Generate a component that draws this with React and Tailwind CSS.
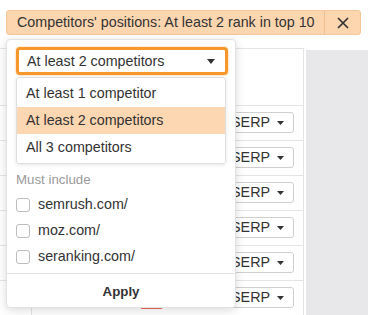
import React from 'react';

const Caret = ({ w = 8, h = 5 }) => (
    <svg width={w} height={h} viewBox={`0 0 ${w} ${h}`} className="shrink-0">
        <polygon points={`0,0 ${w},0 ${w / 2},${h}`} fill="#333" />
    </svg>
);

const options = ['At least 1 competitor', 'At least 2 competitors', 'All 3 competitors'];
const domains = ['semrush.com/', 'moz.com/', 'seranking.com/'];

const SerpButton = () => (
    <div className="ml-auto mr-[9px] mt-[6px] h-[21px] flex items-center gap-[7px] border border-[#cfcfcf] rounded-[3px] pl-[10px] pr-[9px] text-[14.3px] bg-white">
        <span>SERP</span>
        <Caret w={7} h={4} />
    </div>
);

const App = () => {
    return (
        <div className="relative w-[368px] h-[315px] overflow-hidden bg-white text-[#333] font-['Liberation_Sans',Arial,sans-serif]">
            {/* Active filter chip */}
            <div className="pt-[10px] pl-[6px]">
                <div className="flex h-[25px] w-[355px] border border-[#f3c79a] bg-[#fdd6b0] rounded-[3px]">
                    <div className="flex-1 flex items-center pl-[10px] text-[14.3px] whitespace-nowrap">
                        Competitors' positions: At least 2 rank in top 10
                    </div>
                    <div className="w-[36px] flex items-center justify-center border-l border-[#efc092]">
                        <svg width="12" height="12" viewBox="0 0 12 12">
                            <path d="M1 1 L11 11 M11 1 L1 11" stroke="#333" strokeWidth="1.7" />
                        </svg>
                    </div>
                </div>
            </div>

            {/* Table behind the popover */}
            <div className="flex mt-[13px]">
                <div className="w-[304px] border-t border-r border-[#e4e4e4]">
                    <div className="h-[57px] border-b border-[#e4e4e4]" />
                    {[0, 1, 2, 3, 4, 5].map(i => (
                        <div key={i} className="h-[35px] flex border-b border-[#e4e4e4]">
                            <div className="w-[32px] border-r border-[#e4e4e4]" />
                            {i === 5 && <div className="ml-[109px] mt-[26px] h-[2px] w-[21px] bg-[#ef6b57]" />}
                            <SerpButton />
                        </div>
                    ))}
                </div>
                <div className="flex-1 ml-[2px] mt-[2px] bg-[#e8e8ea] h-[300px]" />
            </div>

            {/* Popover */}
            <div className="absolute left-[6px] top-[39px] w-[230px] h-[269px] flex flex-col bg-white border border-[#e2e2e2] rounded-[4px] shadow-[0_2px_10px_rgba(0,0,0,0.15)]">
                <div className="pl-[9px] pr-[7px] pt-[7px]">
                    <div className="w-[212px] h-[28px] flex items-center justify-between border-[3px] border-[#f8972b] rounded-[4px] pl-[8px] pr-[10px] pt-[1px] text-[14.3px] shadow-[0_0_2px_#fbb56a]">
                        <span>At least 2 competitors</span>
                        <Caret />
                    </div>
                    <div className="mt-[2px] w-[210px] border border-[#dedede] rounded-[3px] pt-[2px] pb-[2px] shadow-[0_1px_4px_rgba(0,0,0,0.1)] text-[14.3px]">
                        {options.map((o, i) => (
                            <div key={o} className={`h-[27px] flex items-center pl-[9px] ${i === 1 ? 'bg-[#fdd7b1]' : ''}`}>
                                {o}
                            </div>
                        ))}
                    </div>
                    <div className="mt-[8px] text-[13.3px] leading-[16px] text-[#9a9a9a]">Must include</div>
                    <div className="mt-[4px]">
                        {domains.map(d => (
                            <div key={d} className="h-[26px] flex items-center">
                                <div className="w-[14px] h-[14px] border border-[#bdbdbd] rounded-[3px]" />
                                <span className="ml-[8px] text-[14.3px]">{d}</span>
                            </div>
                        ))}
                    </div>
                </div>
                <div className="mt-[3px] flex-1 border-t border-[#e2e2e2] flex items-center justify-center pt-[2px] text-[13.3px] font-bold">
                    Apply
                </div>
            </div>
        </div>
    );
};

export default App;
